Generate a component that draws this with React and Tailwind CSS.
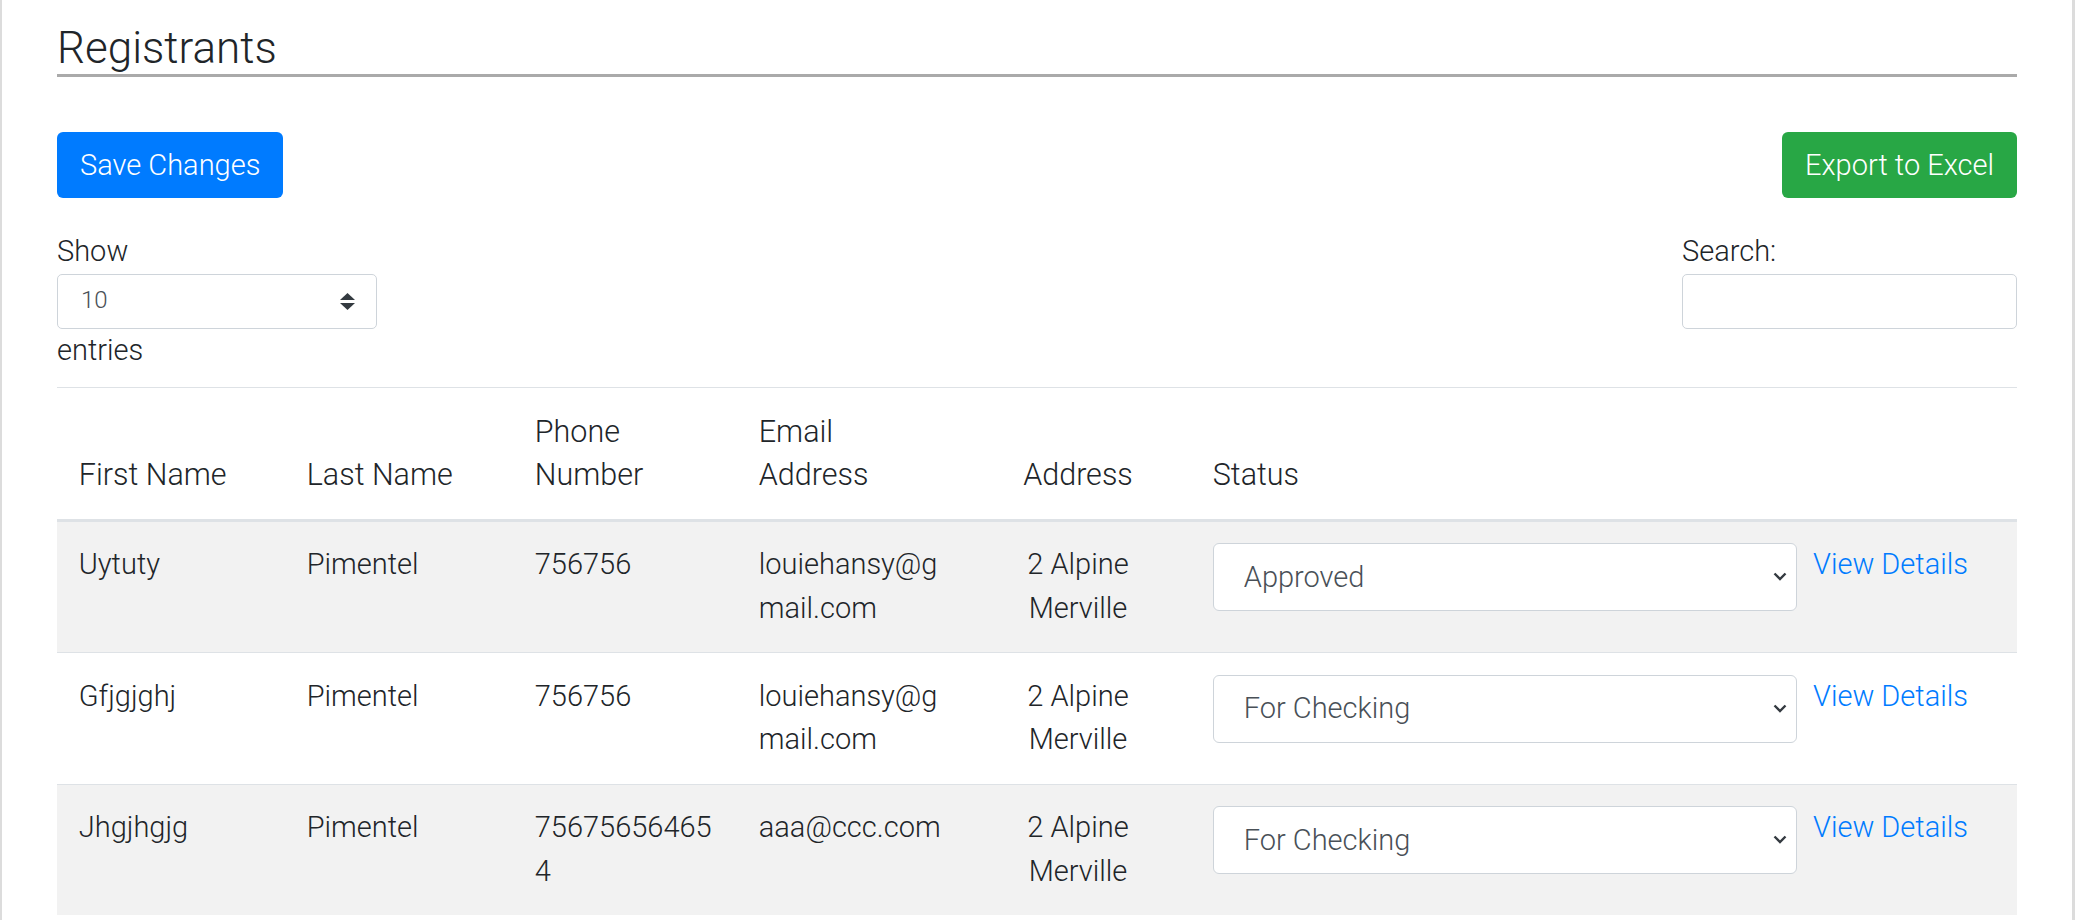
import React from 'react';

const registrants = [
  {
    first: 'Uytuty',
    last: 'Pimentel',
    phone: '756756',
    email: 'louiehansy@gmail.com',
    address: '2 Alpine Merville',
    status: 'Approved'
  },
  {
    first: 'Gfjgjghj',
    last: 'Pimentel',
    phone: '756756',
    email: 'louiehansy@gmail.com',
    address: '2 Alpine Merville',
    status: 'For Checking'
  },
  {
    first: 'Jhgjhgjg',
    last: 'Pimentel',
    phone: '756756564654',
    email: 'aaa@ccc.com',
    address: '2 Alpine Merville',
    status: 'For Checking'
  }
];

function Chevron() {
  return (
    <svg width="14" height="9" viewBox="0 0 14 9" className="absolute right-[10px] top-[29px] pointer-events-none">
      <path d="M1.5 1.5 L7 7 L12.5 1.5" fill="none" stroke="#343a40" strokeWidth="2.4" />
    </svg>
  );
}

function UpDown() {
  return (
    <svg width="15" height="17" viewBox="0 0 15 17" className="absolute right-[22px] top-[19px] pointer-events-none">
      <path d="M7.5 0 L15 7 L0 7 Z" fill="#343a40" />
      <path d="M0 10 L15 10 L7.5 17 Z" fill="#343a40" />
    </svg>
  );
}

export default function App() {
  const cell = 'px-[21.75px] py-[21.75px] border-t border-[#dee2e6] align-top';
  const head = 'px-[21.75px] py-[21.75px] border-t border-b-[3px] border-[#dee2e6] align-bottom text-left font-light text-[30.5px]';

  return (
    <div className="min-h-screen bg-white border-l-2 border-r-[3px] border-[#dcdcdc] font-['Roboto',sans-serif] font-light text-[#212529] text-[29px] leading-[43.5px]">
      <div className="px-[55px] pt-[22px]">
        {/* Title */}
        <h2 className="text-[44px] leading-[52px] font-light border-b-[3px] border-[#aaaaaa]">Registrants</h2>

        {/* Buttons */}
        <div className="mt-[55px] flex justify-between">
          <button className="h-[66px] px-[23px] rounded-[6px] bg-[#007bff] text-white text-[29px] leading-none">
            Save Changes
          </button>
          <button className="h-[66px] px-[23px] rounded-[6px] bg-[#28a745] text-white text-[29px] leading-none">
            Export to Excel
          </button>
        </div>

        {/* Length + search */}
        <div className="mt-[32px] flex justify-between items-start">
          <div>
            <div>Show</div>
            <div className="relative w-[320px]">
              <select className="appearance-none w-full h-[55px] pl-[23px] border border-[#ced4da] rounded-[5px] bg-white text-[24px] text-[#495057] outline-none">
                <option>10</option>
                <option>25</option>
                <option>50</option>
                <option>100</option>
              </select>
              <UpDown />
            </div>
            <div>entries</div>
          </div>
          <div className="w-[335px]">
            <label className="block">Search:</label>
            <input type="text" className="w-full h-[55px] border border-[#ced4da] rounded-[5px] bg-white outline-none px-[12px]" />
          </div>
        </div>

        {/* Table */}
        <table className="mt-[15px] w-full table-fixed border-collapse">
          <colgroup>
            <col className="w-[228px]" />
            <col className="w-[228px]" />
            <col className="w-[224px]" />
            <col className="w-[228px]" />
            <col className="w-[226px]" />
            <col className="w-[622px]" />
            <col className="w-[204px]" />
          </colgroup>
          <thead>
            <tr>
              <th className={head}>First Name</th>
              <th className={head}>Last Name</th>
              <th className={head}>Phone Number</th>
              <th className={head}>Email Address</th>
              <th className={`${head} !text-center`}>Address</th>
              <th className={head}>Status</th>
              <th className={`${head} !pl-0`}></th>
            </tr>
          </thead>
          <tbody>
            {registrants.map((r, i) => (
              <tr key={i} className={i % 2 === 0 ? 'bg-[#f2f2f2]' : 'bg-white'}>
                <td className={cell}>{r.first}</td>
                <td className={cell}>{r.last}</td>
                <td className={`${cell} break-all`}>{r.phone}</td>
                <td className={`${cell} break-all`}>{r.email}</td>
                <td className={`${cell} text-center`}>{r.address}</td>
                <td className={`${cell} !pr-[16px]`}>
                  <div className="relative">
                    <select
                      defaultValue={r.status}
                      className="appearance-none w-full h-[68px] pl-[30px] border border-[#ced4da] rounded-[6px] bg-white text-[29px] text-[#495057] outline-none"
                    >
                      <option>Approved</option>
                      <option>For Checking</option>
                      <option>Rejected</option>
                    </select>
                    <Chevron />
                  </div>
                </td>
                <td className={`${cell} !pl-0`}>
                  <a href="#" className="text-[#007bff]">View Details</a>
                </td>
              </tr>
            ))}
          </tbody>
        </table>
      </div>
    </div>
  );
}
